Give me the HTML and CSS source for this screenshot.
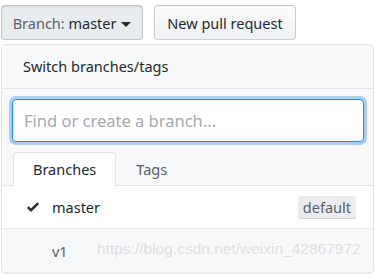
FILE: index.html
```html
<!DOCTYPE html>
<html>
<head>
    <title>Switch branches</title>
    <link rel="stylesheet" href="styles.css">
</head>
<body>
    <div class="top">
        <button class="btn selected">Branch: <span class="ref">master</span> <span class="caret"></span></button>
        <button class="btn">New pull request</button>
    </div>

    <div class="panel">
        <div class="header">Switch branches/tags</div>
        <div class="filter">
            <input class="search" type="text" placeholder="Find or create a branch...">
        </div>
        <div class="tabs">
            <span class="tab active">Branches</span>
            <span class="tab">Tags</span>
        </div>
        <div class="item">
            <svg class="check" width="16" height="16" viewBox="0 0 12 16"><path d="M12 5l-8 8-4-4 1.7-1.7L4 9.6l6.3-6.3L12 5z"/></svg>
            <span class="name">master</span>
            <span class="label">default</span>
        </div>
        <div class="item other">
            <span class="name">v1</span>
            <span class="mark">https://blog.csdn.net/weixin_42867972</span>
        </div>
    </div>
</body>
</html>
```

FILE: styles.css
```css
body { margin: 0; background: #fff; font-family: "Noto Sans", "Open Sans", sans-serif; color: #24292e; }
.top { display: flex; gap: 11px; padding: 5px 0 0 1px; }
.btn { box-sizing: border-box; width: 142px; height: 35px; padding: 0; white-space: nowrap; font: inherit; font-size: 14.5px; color: #24292e; border: 1px solid rgba(27,31,35,0.2); border-radius: 4px; background: linear-gradient(#fafbfc, #eff3f6 90%); }
.btn.selected { background: #e9ecef; color: #586069; box-shadow: inset 0 1px 2px rgba(27,31,35,0.1); }
.ref { color: #24292e; }
.caret { display: inline-block; width: 0; height: 0; vertical-align: middle; border: 5px solid transparent; border-top-color: #24292e; border-bottom: 0; margin-left: 1px; }
.panel { margin: 4px 0 0 1px; width: 371px; border: 1px solid #e1e4e8; border-radius: 4px; overflow: hidden; }
.header { height: 43px; line-height: 43px; padding-left: 21px; font-size: 14.5px; background: #f6f8fa; border-bottom: 1px solid #e1e4e8; }
.filter { background: #f6f8fa; padding: 10px 9px 10px 10px; }
.search { display: block; width: 100%; box-sizing: border-box; height: 43px; padding: 0 11px; font: inherit; font-size: 16.5px; color: #24292e; border: 1px solid #2188ff; border-radius: 4px; outline: none; box-shadow: 0 0 0 3px rgba(3,102,214,0.3); }
.search::placeholder { color: #a3aab1; }
.tabs { display: flex; background: #f6f8fa; padding-left: 11px; border-bottom: 1px solid #e1e4e8; height: 33px; }
.tab { padding: 0 19px; line-height: 33px; font-size: 14.5px; color: #586069; border: 1px solid transparent; border-bottom: 0; border-radius: 4px 4px 0 0; }
.tab.active { background: #fff; color: #24292e; border-color: #e1e4e8; margin-bottom: -1px; }
.item { display: flex; align-items: center; height: 42px; padding-left: 50px; border-bottom: 1px solid #eaecef; font-size: 14.5px; position: relative; }
.check { position: absolute; left: 23px; top: 13px; fill: #24292e; }
.name { flex: 1; }
.label { margin-right: 17px; padding: 1px 5px 2px; font-size: 14.5px; color: #586069; background: #eaecef; border-radius: 3px; box-shadow: inset 0 -1px 0 rgba(27,31,35,0.12); }
.other { height: 43px; background: #f6f8fa; color: #586069; }
.mark { position: absolute; left: 95px; top: 11px; font-family: "Liberation Sans", Arial, sans-serif; font-size: 15.5px; color: rgba(200,200,200,0.55); }
```
